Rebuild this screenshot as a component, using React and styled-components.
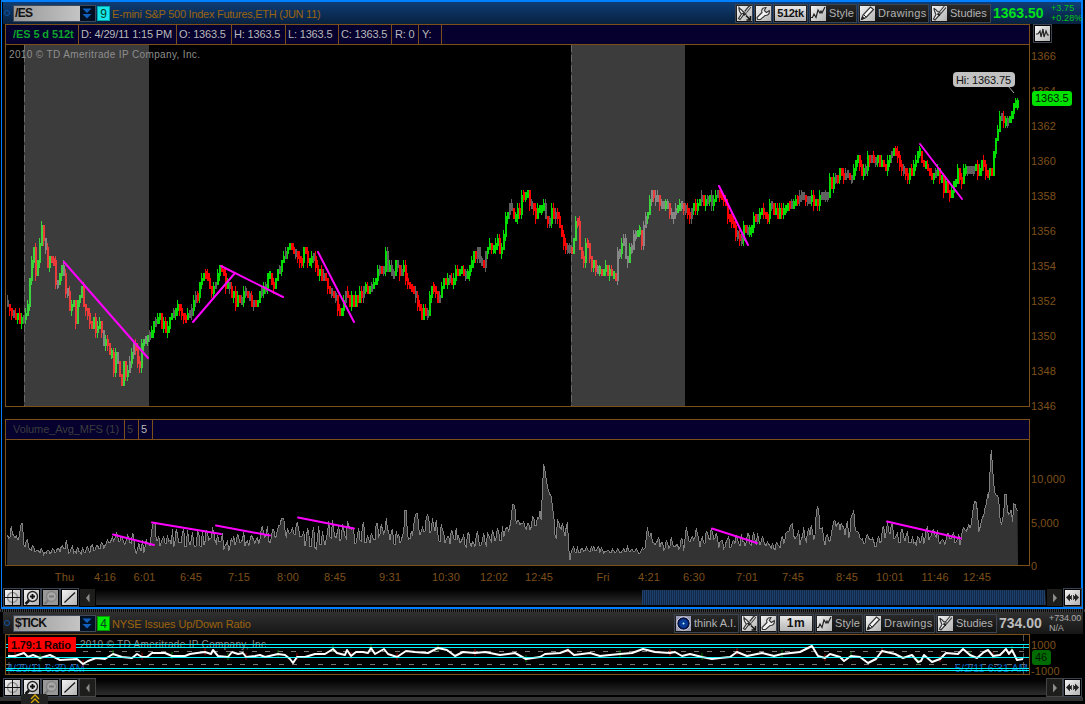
import React from "react";
import styled, { createGlobalStyle } from "styled-components";

const GlobalStyle = createGlobalStyle`
  * { box-sizing: border-box; }
  body { margin: 0; background: #000; font: 11px "Liberation Sans", Arial, sans-serif; overflow: hidden; }
  svg { display: block; flex: none; }
`;

const BROWN = "#7d501a";

const Screen = styled.div`
  width: 1085px;
  height: 704px;
  background: #000;
  overflow: hidden;
  display: flex;
  flex-direction: column;
`;

const Panel = styled.section`
  width: ${(p) => (p.$active ? 1082 : 1085)}px;
  height: ${(p) => p.$height}px;
  flex: none;
  border: 0 solid #007fff;
  border-width: ${(p) => (p.$active ? "2px 2px 2px 1px" : "0")};
  margin-left: ${(p) => (p.$active ? 1 : 0)}px;
  padding-left: ${(p) => (p.$active ? 1 : 3)}px;
`;

const Divider = styled.div`
  height: 3px;
  flex: none;
  background: repeating-linear-gradient(90deg, #3c3c3c 0 1px, #080808 1px 2px);
`;

const Header = styled.header`
  height: 22px;
  width: ${(p) => (p.$blue ? 1078 : 1080)}px;
  display: flex;
  align-items: center;
  background: ${(p) => (p.$blue ? "linear-gradient(#0e3d76, #08213f)" : "linear-gradient(#303030, #161616)")};
`;

const Dot = styled.i`
  width: 6px;
  height: 6px;
  margin: 0 3px 0 1px;
  border: 1.5px solid #0c55a8;
  border-radius: 50%;
  flex: none;
`;

const Combo = styled.div`
  width: 83px;
  height: 17px;
  display: flex;
  border: 1px solid #3f4a58;
  flex: none;
`;

const ComboField = styled.div`
  width: 66px;
  padding: 1px 1px;
  line-height: 13px;
  font-weight: bold;
  font-size: 12px;
  letter-spacing: -0.7px;
  color: #111;
  background: linear-gradient(90deg, #999, #c4c4c4);
`;

const ComboArrow = styled.div`
  flex: 1;
  background: #000f22;
  display: flex;
  justify-content: center;
  align-items: center;
`;

const LinkBadge = styled.div`
  width: 13px;
  height: 15px;
  margin: 0 2px 0 1px;
  text-align: center;
  font-size: 12px;
  line-height: 14px;
  color: #042;
  background: ${(p) => p.$color};
  border: 1px solid ${(p) => p.$edge};
  flex: none;
`;

const Title = styled.h1`
  flex: 1;
  margin: 0;
  padding-top: ${(p) => p.$drop || 0}px;
  font-size: 11px;
  font-weight: normal;
  letter-spacing: ${(p) => p.$spacing}px;
  color: #9c630f;
  white-space: nowrap;
`;

const ToolBar = styled.div`
  display: flex;
  height: 19px;
  flex: none;
  gap: 1px;
`;

const ToolGroup = styled.div`
  width: ${(p) => p.$width}px;
  height: 19px;
  padding: 1px;
  display: flex;
  align-items: center;
  gap: 3px;
  border: 1px solid #3b4450;
  background: linear-gradient(#292929, #111);
  color: #b2b2b2;
  font-size: 11px;
  letter-spacing: ${(p) => p.$spacing || 0}px;
  white-space: nowrap;
`;

const Period = styled.div`
  flex: 1;
  height: 15px;
  text-align: center;
  line-height: 15px;
  font-weight: bold;
  font-size: ${(p) => (p.$large ? 12 : 11)}px;
  letter-spacing: ${(p) => (p.$large ? 0.5 : -0.3)}px;
  color: #111;
  background: linear-gradient(#e8e8e8, #b6b6b6);
`;

const Last = styled.strong`
  width: ${(p) => p.$width}px;
  flex: none;
  padding-left: 2px;
  font-size: 14px;
  color: ${(p) => p.$color};
  letter-spacing: ${(p) => p.$spacing}px;
`;

const Change = styled.div`
  width: ${(p) => p.$width}px;
  flex: none;
  color: ${(p) => p.$color};
  font-size: 9px;
  line-height: 10px;
  letter-spacing: ${(p) => p.$spacing}px;
  white-space: nowrap;
`;

const Body = styled.div`
  display: flex;
  margin-left: 2px;
`;

const Study = styled.div`
  width: 1025px;
  height: ${(p) => p.$height}px;
  margin-bottom: ${(p) => p.$gap || 0}px;
  border: 1px solid ${BROWN};
`;

const InfoStrip = styled.div`
  height: 20px;
  display: flex;
  background: #05002d;
  border-bottom: 1px solid ${BROWN};
`;

const Cell = styled.div`
  width: ${(p) => p.$width}px;
  padding-left: ${(p) => p.$indent || 2}px;
  line-height: 19px;
  border-right: 1px solid ${BROWN};
  color: ${(p) => p.$color || "#b9b9b9"};
  font-weight: ${(p) => (p.$bold ? "bold" : "normal")};
  letter-spacing: ${(p) => p.$spacing ?? -0.17}px;
  white-space: nowrap;
`;

const Axis = styled.aside`
  width: 50px;
  display: flex;
  flex-direction: column;
`;

const AxisLabel = styled.div`
  height: ${(p) => p.$height}px;
  padding-left: 1px;
  color: ${BROWN};
  font-size: 11px;
  letter-spacing: ${(p) => p.$spacing ?? 0.1}px;
  line-height: 14px;
  flex: none;
`;

const AxisTool = styled.div`
  width: 19px;
  height: 19px;
  margin: 0 0 6px 3px;
  padding: 1px;
  border: 1px solid #3b4450;
  flex: none;
`;

const PriceTag = styled.div`
  position: absolute;
  left: ${(p) => p.$x}px;
  top: ${(p) => p.$y}px;
  width: ${(p) => p.$width}px;
  height: 15px;
  padding-left: 3px;
  line-height: 15px;
  border-radius: 3px;
  background: ${(p) => p.$bg};
  color: #001800;
`;

const ScrollRow = styled.div`
  display: flex;
  height: 19px;
  width: 1079px;
`;

const ScrollButton = styled.div`
  width: ${(p) => (p.$dark ? 17 : 19)}px;
  height: 19px;
  padding: ${(p) => (p.$dark ? "1px 0" : "1px")};
  border: 1px solid ${(p) => (p.$dark ? p.$edge || "#000" : "#3b4450")};
  background: ${(p) => (p.$dark ? "#1d1d1b" : "#000")};
  flex: none;
`;

const Track = styled.div`
  flex: 1;
  height: 15px;
  margin-top: 2px;
  display: flex;
  justify-content: flex-end;
  background: linear-gradient(#020202, #2d2d2d);
`;

const Thumb = styled.div`
  width: 403px;
  margin-right: 1px;
  background: repeating-linear-gradient(90deg, #1d416f 0 1px, #132844 1px 2px);
`;

const Footer = styled.footer`
  height: 8px;
  display: flex;
  align-items: flex-start;
`;

const FooterBar = styled.div`
  width: ${(p) => p.$width}px;
  height: 4px;
  margin-top: 2px;
  background: #333;
`;

const FooterTab = styled.div`
  width: 27px;
  height: 10px;
  margin-top: -1px;
  display: flex;
  justify-content: center;
  border-radius: 3px 3px 0 0;
  background: #222;
`;

/* ---------- icons ---------- */

function Icon({ name }) {
  const marks = {
    tools: (
      <>
        <path d="M13 .5 8.500 6" stroke="#333" strokeWidth="3.200" />
        <path d="M12.800 1 8 7" stroke="#ddd" strokeWidth="1.200" />
        <path d="M2 1.500c1 2 2 1.500 3.500 3.500L9 8 6.500 9 3 13.500 1.500 12.500 4.500 8C3 6 1.500 5 2 1.500z" fill="#f0f0f0" stroke="#333" strokeWidth="1.200" />
        <path d="m5.500 7 2.500 2" stroke="#222" strokeWidth="2" />
        <path d="m9 9.500 4 4M13.500 10v4h-4" stroke="#111" strokeWidth="1.500" fill="none" />
      </>
    ),
    wrench: (
      <path
        d="M1.500 13.500 1 11.500l5-5C5 4 6.500 1.500 10 1.500L8.300 4.500l2 2 3-1.800c.5 3-1.600 5-4.300 4.800l-4.500 4z"
        fill="#f3f3f3"
        stroke="#333"
        strokeWidth="1.1"
      />
    ),
    style: <path d="M0 11.500h1.500L3 8l2 3.500L7 4l2 3 1-2 1 2 3-6" fill="none" stroke="#222" strokeWidth="1.2" />,
    pencil: (
      <>
        <path d="M1.500 13.500 3 9l7.500-8 3 2.500-7.500 8z" fill="#fafafa" stroke="#333" strokeWidth="1.200" />
        <path d="m4 9 2 2M1.500 13.500l1-3 2 1.700z" stroke="#222" strokeWidth="1" fill="#222" />
      </>
    ),
    brush: (
      <>
        <path d="M13 1 8 7" stroke="#333" strokeWidth="3.200" />
        <path d="M12.800 1.200 8 7" stroke="#ddd" strokeWidth="1.200" />
        <path d="M2 2c1 2 2 1 3 3s2 0 3 1.500 0 2-1.500 3.500L3 14l-1.500-1L4 8.500C3 6 2 5 2 2z" fill="#f3f3f3" stroke="#333" strokeWidth="1.200" />
        <path d="m5.500 7.500 2.500 2" stroke="#222" strokeWidth="2" />
      </>
    ),
    wave: <path d="M1 8h2l2-3 1 6 2-8 1 8 2-6 1.500 4H14" fill="none" stroke="#222" strokeWidth="1.200" />,
    eye: (
      <>
        <path d="M0 0h15v15H0z" fill="#9a9cb5" />
        <circle cx="7.5" cy="7.5" r="6.700" fill="#08143f" stroke="#dcdce8" />
        <circle cx="7.5" cy="7.5" r="4.500" fill="#083a98" />
        <circle cx="7.500" cy="7.500" r="1" fill="#cff" />
      </>
    ),
    cross: (
      <>
        <circle cx="7.5" cy="7.500" r="5" fill="none" stroke="#8b8b8b" strokeWidth="1.300" />
        <path d="M7.500 0v15M0 7.500h15" stroke="#111" />
      </>
    ),
    zoomIn: (
      <>
        <circle cx="8.500" cy="6.500" r="5" fill="#ddd" stroke="#222" strokeWidth="1.300" />
        <path d="M5 10.500 1.500 14" stroke="#111" strokeWidth="2.500" />
        <path d="M8.500 4v5M6 6.500h5" stroke="#111" strokeWidth="1.800" />
      </>
    ),
    zoomOut: (
      <>
        <circle cx="8.500" cy="6.500" r="5" fill="#a7a7a7" stroke="#848484" strokeWidth="1.300" />
        <path d="M5 10.500 1.500 14M6 6.500h5" stroke="#777" strokeWidth="2" />
      </>
    ),
    line: <path d="M2.500 12.500 13 2.500" stroke="#111" strokeWidth="1.200" />,
    expand: (
      <>
        <path d="m1 7.500 4-4v8zM14 7.500l-4-4v8z" fill="#222" />
        <path d="M4 7.500h2M9 7.500h2" stroke="#222" strokeWidth="3" />
        <path d="M6.500 5v5M8.500 5v5" stroke="#444" />
      </>
    ),
  };
  const muted = name === "zoomOut";
  return (
    <svg width="15" height="15" viewBox="0 0 15 15">
      <defs>
        <linearGradient id="face" x1="0" y1="0" x2="1" y2="1">
          <stop offset="0" stopColor="#f2f2f2" />
          <stop offset="1" stopColor="#b3b3b3" />
        </linearGradient>
      </defs>
      <rect width="15" height="15" fill={muted ? "#989898" : "url(#face)"} />
      {marks[name]}
    </svg>
  );
}

const Triangle = ({ right }) => (
  <svg width="15" height="15">
    <path d={right ? "M6 3.500 10 8l-4 4.500z" : "M9.500 3.500 6 8l3.500 4.500z"} fill="#8b8b8b" />
  </svg>
);

function Symbol({ text }) {
  return (
    <Combo>
      <ComboField>{text}</ComboField>
      <ComboArrow>
        <svg width="13" height="13">
          <path d="M1.500 1.500h9L6 6zM1.500 7h9L6 11.500z" fill="#1260bd" />
        </svg>
      </ComboArrow>
    </Combo>
  );
}

function Tools({ period, periodWidth, ai }) {
  return (
    <ToolBar>
      {ai && (
        <ToolGroup $width={65} $spacing={0}>
          <Icon name="eye" />
          think A.I.
        </ToolGroup>
      )}
      <ToolGroup $width={18}><Icon name="tools" /></ToolGroup>
      <ToolGroup $width={18}><Icon name="wrench" /></ToolGroup>
      <ToolGroup $width={periodWidth}><Period $large={ai}>{period}</Period></ToolGroup>
      <ToolGroup $width={48} $spacing={0.1}><Icon name="style" />Style</ToolGroup>
      <ToolGroup $width={71} $spacing={0.35}><Icon name="pencil" />Drawings</ToolGroup>
      <ToolGroup $width={61}><Icon name="brush" />Studies</ToolGroup>
    </ToolBar>
  );
}

function ScrollBar({ thumb, edge }) {
  return (
    <ScrollRow>
      {["cross", "zoomIn", "zoomOut", "line"].map((n) => (
        <ScrollButton key={n}><Icon name={n} /></ScrollButton>
      ))}
      <ScrollButton $dark $edge={edge}><Triangle /></ScrollButton>
      <Track>{thumb && <Thumb />}</Track>
      <ScrollButton $dark $edge={edge}><Triangle right /></ScrollButton>
      <ScrollButton><Icon name="expand" /></ScrollButton>
    </ScrollRow>
  );
}

/* ---------- data ---------- */

const parse = (s) => s.trim().split(/\s+/).map((p) => p.split(",").map(Number));

// Price swings as x,y turning points.
const SWINGS = parse(`
8,302 11,313 14,318 17,311 20,323 23,308 25,314 27,318 29,285 31,264 34,245 36,268 39,254 42,230 44,240 46,250 48,270
51,255 53,260 58,288 60,272 62,268 64,270 66,285 70,311 74,298 76,318 79,300 82,290 84,306 88,316 91,328 94,322
97,338 100,325 103,344 106,333 109,350 112,355 114,368 117,352 120,378 121,388 123,370 125,362 127,379 129,370 132,355
134,347 136,352 138,367 140,364 142,350 145,340 148,336 151,336 154,325 158,322 160,316 163,326 167,329 170,325
173,312 176,308 178,304 181,315 184,314 187,316 190,312 193,302 196,293 199,290 202,280 206,280 209,285 212,290
215,277 218,277 221,270 224,276 227,284 230,288 233,292 236,300 240,303 244,292 247,290 250,300 254,305 258,302
261,296 264,290 267,280 270,276 273,288 276,280 279,272 283,262 286,256 289,252 292,246 295,252 299,266 304,252
309,262 313,257 319,273 325,278 330,292 336,300 340,312 345,295 349,302 353,303 358,297 363,290 370,287 375,285
378,270 382,273 386,260 390,270 393,271 397,265 402,275 404,265 408,280 413,293 418,308 423,314 428,307 432,290
435,287 439,301 443,287 448,275 453,283 458,270 465,275 470,265 475,255 478,250 483,265 488,253 491,243 495,247
498,247 501,252 503,237 507,220 510,204 513,212 517,216 521,207 523,195 525,200 527,193 531,205 536,215 540,208
545,213 548,222 552,215 557,222 561,225 565,248 568,245 572,253 576,225 578,228 580,247 583,263 585,251 588,245
591,262 593,257 597,273 602,275 606,267 610,273 613,283 616,275 618,257 621,245 623,240 627,254 629,255 632,243
637,232 640,230 642,237 646,220 649,207 652,193 655,197 660,204 667,205 672,215 678,212 683,208 688,218 693,215
697,200 700,195 704,205 707,197 712,202 717,192 720,195 725,206 730,215 735,230 740,236 744,230 748,235 750,227
755,217 760,215 762,211 766,215 772,207 778,216 783,211 788,201 791,208 795,196 802,196 803,202 808,194 815,205
820,200 827,196 830,182 833,183 838,173 842,172 847,175 852,177 855,168 857,160 863,173 868,162 872,160 877,162
880,160 885,163 888,163 892,152 895,152 900,163 905,175 910,173 915,163 918,151 922,160 928,170 932,182 937,170
940,175 943,185 947,188 950,196 955,183 958,175 962,179 967,165 970,173 973,163 977,173 982,162 985,170 992,168
995,145 997,136 999,123 1002,112 1005,124 1008,119 1013,115 1015,102 1017,100
`);

// Volume envelope as x,peak,trough.
const VOLUME = parse(`
7,531,540 11,526,538 14,524,540 17,530,545 19,530,540 20,523,523 22,523,523 23,536,545 26,535,548 30,545,551 45,548,555
60,547,553 66,539,552 75,546,554 85,547,554 95,544,552 104,540,548 112,533,545 114,529,540 125,532,545 134,532,550
137,540,556 145,535,552 150,530,545 153,522,522 155,522,522 156,535,547 165,535,547 172,525,547 180,532,548 187,528,548
200,530,548 213,525,540 220,532,548 226,538,552 235,530,546 245,533,546 258,530,545 263,524,540 270,528,542 278,526,535
281,518,518 284,518,518 285,530,542 290,525,535 296,518,534 298,518,535 303,528,545 315,528,550 325,525,547 330,520,540 340,526,543
350,517,535 355,525,545 363,521,547 370,530,545 375,522,540 386,517,538 395,530,545 403,532,543 404,510,510 406,510,510
407,530,542 413,526,541 415,510,510 417,510,520 418,522,540 427,515,535 435,520,538 445,528,546 460,527,545 470,532,548
477,526,548 485,535,545 496,520,542 503,522,540 510,515,530 512,504,504 514,504,504 516,520,528 520,518,525 527,522,530
535,510,528 538,520,530 540,506,506 541,506,525 543,462,464 545,470,475 547,487,490 549,487,505 550,487,490 553,512,520
555,520,540 560,517,530 567,522,540 569,540,562 572,545,552 580,548,553 596,545,552 605,550,553 615,548,553 627,546,553
640,550,553 645,540,548 647,527,530 649,526,540 652,536,548 658,537,545 665,540,552 670,535,548 675,545,549 684,535,553
685,525,535 690,535,543 695,525,540 700,535,547 712,526,540 718,533,548 740,535,548 757,530,545 765,538,546 777,540,552
785,530,542 791,524,524 793,524,537 800,530,545 807,522,540 815,527,540 816,506,506 818,506,506 819,527,529 822,527,530
823,537,545 830,533,545 834,518,518 836,518,530 843,515,535 850,520,540 853,502,508 855,525,535 863,537,545 868,530,540
875,538,548 880,530,545 889,520,535 897,530,545 904,526,540 910,537,547 920,530,545 928,527,542 936,524,540 942,535,546
949,524,540 955,532,546 960,535,545 962,525,535 970,520,532 974,501,501 976,501,505 978,520,532 984,514,517 985,497,500
987,495,516 989,490,495 990,450,450 991,450,452 993,480,483 995,495,497 998,496,507 1000,515,525 1003,515,525 1004,494,494
1006,494,494 1007,507,520 1010,505,515 1012,505,541 1013,504,504 1015,503,505 1017,510,518 1018,565,565
`);

const TICK = parse(`
8,656 15,656 24,653 28,657 33,655 40,658 50,655 60,660 77,659 83,664 88,661 96,658 105,659 113,654 122,657 132,658
137,654 142,657 147,657 152,653 165,653 172,656 185,656 190,654 197,653 205,652 211,654 213,650 218,656 228,657 232,652
238,654 243,653 246,657 255,656 260,655 265,657 278,654 285,655 290,659 293,663 297,657 305,657 315,654 325,654 333,649
337,653 345,655 347,650 351,656 356,652 363,652 368,653 371,648 375,654 384,649 388,654 397,657 406,651 415,652 428,653
438,648 447,650 455,656 463,652 475,653 485,652 500,655 515,653 526,659 540,657 545,654 560,653 568,650 574,655 590,653
600,656 620,654 632,653 643,649 655,652 670,653 675,652 682,656 690,654 702,657 712,659 720,658 730,657 737,652 747,656
762,653 774,656 782,654 800,652 812,646 818,656 825,658 830,654 840,657 844,661 851,656 860,657 868,663 876,659 882,651
895,654 903,658 912,655 918,662 921,661 924,655 932,662 940,659 946,653 958,654 963,649 970,655 977,658 984,652 988,650
993,656 1000,655 1006,649 1009,654 1012,650 1017,660 1023,659
`);

function noise(i) {
  const v = Math.sin(i * 127.1 + 11.7) * 43758.5453;
  return v - Math.floor(v);
}

function sample(points, x, k = 1) {
  let i = 1;
  while (i < points.length - 1 && points[i][0] < x) i++;
  const a = points[i - 1];
  const b = points[i];
  const t = Math.max(0, Math.min(1, (x - a[0]) / (b[0] - a[0])));
  return a[k] + (b[k] - a[k]) * t;
}

const inSession = (x) => (x >= 24 && x < 149) || (x >= 571 && x < 685);

// One price tick (0.25) is 4.375px tall; 1366 sits at y = 56.
const TICK_PX = 4.375;
const snap = (y) => 56 + Math.round((y - 56) / TICK_PX) * TICK_PX;

const BARS = [];
for (let x = 7, i = 0, open = snap(302); x <= 1017; x += 2, i++) {
  const mid = sample(SWINGS, x + 1);
  const close = snap(mid + (noise(i) - 0.5) * 11);
  const top = Math.min(open, close) - 1.5;
  const bottom = Math.max(open, close) + 1.5;
  const bright = inSession(x);
  const greyShare = x > 616 && x < 685 ? 0.5 : 0.16;
  const grey = open === close ? noise(i + 900) < 0.6 : noise(i + 900) < greyShare;
  const up = open === close ? noise(i + 50) > 0.5 : close < open;
  const color = grey
    ? bright ? "#868686" : "#606060"
    : up
      ? bright ? "#3bd33b" : "#00dc00"
      : bright ? "#ec3b3b" : "#ff0000";
  BARS.push({
    x, color,
    top: top - (open === close ? 2.5 : 0),
    bottom: bottom + (open === close ? 2.5 : 0),
    high: top - (noise(i + 300) > 0.5 ? TICK_PX : 0),
    low: bottom + (noise(i + 600) > 0.5 ? TICK_PX : 0),
  });
  open = close;
}

const VOLUME_LINE = [];
for (let x = 7, i = 0; x <= 1018; x += 1.25, i++) {
  const hi = sample(VOLUME, x, 1);
  const lo = sample(VOLUME, x, 2);
  const phase = (i + Math.floor(noise(Math.floor(i / 6)) * 2)) % 4 < 2;
  const t = phase ? noise(i) * 0.7 - 0.05 : 0.6 + noise(i) * 0.45;
  VOLUME_LINE.push(`${x + 0.5},${(hi + (lo - hi) * t).toFixed(1)}`);
}

const TIMES = [
  ["Thu", 64.5], ["4:16", 105], ["6:01", 144.5], ["6:45", 191], ["7:15", 239], ["8:00", 288], ["8:45", 335],
  ["9:31", 390], ["10:30", 446], ["12:02", 494], ["12:45", 539], ["Fri", 603], ["4:21", 649], ["6:30", 694],
  ["7:01", 747], ["7:45", 793], ["8:45", 847], ["10:01", 890], ["11:46", 935], ["12:45", 977],
];

const TimeAxis = styled.svg`
  margin-left: -3px;
  text { fill: ${BROWN}; font-size: 11px; text-anchor: middle; letter-spacing: 0.1px; }
`;

const Plot = styled.svg`
  overflow: visible;
  position: relative;
`;

function Trends({ lines }) {
  return lines.map((l) => (
    <line key={l.join()} x1={l[0]} y1={l[1]} x2={l[2]} y2={l[3]} stroke="#ff00ff" strokeWidth="2" strokeLinecap="round" />
  ));
}

function PricePlot() {
  return (
    <Plot width="1023" height="361" viewBox="6 45 1023 361">
      <rect x="24" y="45" width="125" height="361" fill="#3c3c3c" />
      <rect x="571" y="45" width="114" height="361" fill="#3c3c3c" />
      <path d="M24.500 45v361M571.500 45v361" stroke="#6a6a6a" strokeDasharray="7 3" />
      <text x="9" y="58" fill="#8e8e8e" fontSize="10" textLength="191">2010 © TD Ameritrade IP Company, Inc.</text>
      <g shapeRendering="crispEdges">
        {BARS.map((b) => (
          <g key={b.x} fill={b.color}>
            <rect x={b.x} y={b.top} width="2" height={b.bottom - b.top} />
            <rect x={b.x} y={b.high} width="1" height={b.low - b.high} />
          </g>
        ))}
      </g>
      <Trends
        lines={[
          [64, 262, 148, 358], [193, 322, 235, 273], [221, 266, 283, 297], [318, 252, 354, 322],
          [719, 186, 748, 245], [920, 144, 962, 199],
        ]}
      />
      <path d="m1008 86 6 7" stroke="#aaa" />
      <rect x="953" y="72" width="62" height="15" rx="4" fill="#c1c1c1" />
      <text x="956" y="84" fill="#111" fontSize="11" textLength="55">Hi: 1363.75</text>
    </Plot>
  );
}

function VolumePlot() {
  return (
    <Plot width="1023" height="125" viewBox="6 440 1023 125">
      <polygon points={`7,565 ${VOLUME_LINE.join(" ")} 1018,565`} fill="#333" />
      <polyline points={VOLUME_LINE.join(" ")} fill="none" stroke="#808080" strokeWidth="1" shapeRendering="crispEdges" />
      <Trends
        lines={[
          [113, 534.5, 154, 545], [152, 522.5, 221, 534], [216, 525.5, 270, 535.500], [298, 517.500, 354, 528.500],
          [712, 528.500, 757, 543], [887, 521.500, 961, 538.500],
        ]}
      />
    </Plot>
  );
}

function TickPlot() {
  const line = TICK.map((p) => p.join()).join(" ");
  return (
    <Plot width="1023" height="39" viewBox="6 635 1023 39">
      <path d="M9 635v39M1023.500 635v39" stroke="#555" strokeDasharray="6 3" />
      <path d="M83 651.500H1029M6 664.500h1023" stroke="#777" strokeDasharray="5 8" />
      <text x="80" y="648" fill="#8e8e8e" fontSize="10" textLength="189">2010 © TD Ameritrade IP Company, Inc.</text>
      <text x="7" y="672" fill="#0860bd" fontSize="11" textLength="78">4/29/11 6:30 AM</text>
      <text x="955" y="672" fill="#0860bd" fontSize="11" textLength="73">5/2/11 6:31 AM</text>
      {TICK.filter((_, i) => i % 4 === 1).map((p, i) => (
        <path key={p[0]} d={`M${p[0]} ${p[1] - 4}v7`} stroke={i % 2 ? "#007c00" : "#a00000"} />
      ))}
      <path d="M6 644.500h1023M6 647.500h1023M6 657.500h1023M6 668.500h1023M6 670.500h1023" stroke="#00f5ff" shapeRendering="crispEdges" />
      <polyline points={line} fill="none" stroke="#fff" strokeWidth="2" strokeLinejoin="round" />
      <path d="M6 657.500h1023" stroke="#00f5ff" strokeOpacity="0.6" shapeRendering="crispEdges" />
      <rect x="8" y="637" width="68" height="15" fill="#f00" />
      <text x="11" y="649" fill="#180000" fontSize="11" fontWeight="bold" textLength="60">1.79:1 Ratio</text>
    </Plot>
  );
}

const PriceAxis = styled(Axis)`
  position: relative;
  height: 541px;
`;

const TickAxis = styled(Axis)`
  position: relative;
  padding-top: 4px;
  height: 44px;
`;

export default function App() {
  return (
    <Screen>
      <GlobalStyle />
      <Panel $active $height={609}>
        <Header $blue>
          <Dot />
          <Symbol text="/ES" />
          <LinkBadge $color="#19e5ee" $edge="#0aa">9</LinkBadge>
          <Title $spacing={-0.26} $drop={2}>E-mini S&amp;P 500 Index Futures,ETH (JUN 11)</Title>
          <Tools period="512tk" periodWidth={35} />
          <Last $width={60} $color="#00e11b" $spacing={0}>1363.50</Last>
          <Change $width={30} $color="#00c51b" $spacing={0.1}>+3.75<br />+0.28%</Change>
        </Header>
        <Body>
          <div>
            <Study $height={383} $gap={12}>
              <InfoStrip>
                <Cell $width={73} $indent={7} $color="#0fa52b" $bold $spacing={-0.1}>/ES 5 d 512t</Cell>
                <Cell $width={98}>D: 4/29/11 1:15 PM</Cell>
                <Cell $width={55}>O: 1363.5</Cell>
                <Cell $width={54}>H: 1363.5</Cell>
                <Cell $width={53}>L: 1363.5</Cell>
                <Cell $width={53}>C: 1363.5</Cell>
                <Cell $width={27} $indent={3}>R: 0</Cell>
                <Cell $width={23} $indent={3}>Y:</Cell>
              </InfoStrip>
              <PricePlot />
            </Study>
            <Study $height={147}>
              <InfoStrip>
                <Cell $width={119} $indent={7} $color="#3d3d3d" $spacing={-0.08}>Volume_Avg_MFS (1)</Cell>
                <Cell $width={14} $color="#3d3d3d">5</Cell>
                <Cell $width={14}>5</Cell>
              </InfoStrip>
              <VolumePlot />
            </Study>
          </div>
          <PriceAxis>
            <AxisTool><Icon name="wave" /></AxisTool>
            {[1366, 1364, 1362, 1360, 1358, 1356, 1354, 1352, 1350, 1348].map((p) => (
              <AxisLabel key={p} $height={35}>{p}</AxisLabel>
            ))}
            <AxisLabel $height={73}>1346</AxisLabel>
            <AxisLabel $height={44}>10,000</AxisLabel>
            <AxisLabel $height={43}>5,000</AxisLabel>
            <AxisLabel $height={14}>0</AxisLabel>
            <PriceTag $x={2} $y={67} $width={40} $bg="#00e100">1363.5</PriceTag>
          </PriceAxis>
        </Body>
        <TimeAxis width="1030" height="22" viewBox="0 566 1030 22">
          {TIMES.map(([t, x]) => <text key={x} x={x} y="581">{t}</text>)}
        </TimeAxis>
        <ScrollBar thumb />
      </Panel>
      <Divider />
      <Panel $height={83}>
        <Header>
          <Dot />
          <Symbol text="$TICK" />
          <LinkBadge $color="#00ee00" $edge="#090">4</LinkBadge>
          <Title $spacing={-0.12} $drop={2}>NYSE Issues Up/Down Ratio</Title>
          <Tools period="1m" periodWidth={36} ai />
          <Last $width={52} $color="#bbb" $spacing={0}>734.00</Last>
          <Change $width={34} $color="#aaa" $spacing={-0.1}>+734.00<br />N/A</Change>
        </Header>
        <Body>
          <Study $height={41} $gap={3}><TickPlot /></Study>
          <TickAxis>
            <AxisLabel $height={26}>1000</AxisLabel>
            <AxisLabel $height={14}>-1000</AxisLabel>
            <PriceTag $x={2} $y={16} $width={19} $bg="#006b00">46</PriceTag>
          </TickAxis>
        </Body>
        <ScrollBar edge="#444" />
      </Panel>
      <Footer>
        <FooterBar $width={21} />
        <FooterTab>
          <svg width="10" height="9"><path d="m1 5 4-4 4 4M1 9l4-4 4 4" fill="none" stroke="#d8a800" strokeWidth="1.300" /></svg>
        </FooterTab>
        <FooterBar $width={1035} />
      </Footer>
    </Screen>
  );
}
